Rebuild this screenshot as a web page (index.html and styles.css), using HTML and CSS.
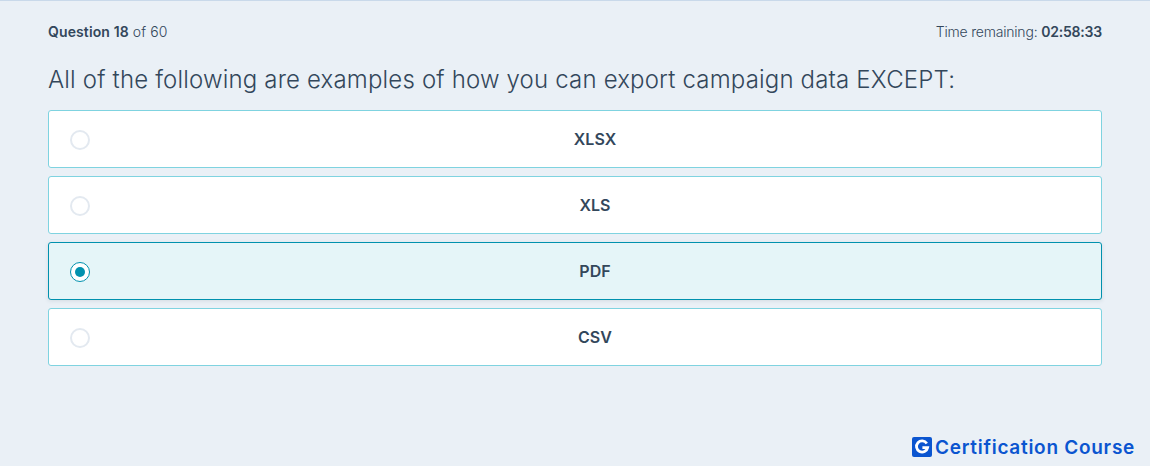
FILE: index.html
```html
<!DOCTYPE html>
<html lang="en">
<head>
<meta charset="utf-8">
<title>Question 18 of 60</title>
<link rel="stylesheet" href="styles.css">
</head>
<body>
<main class="quiz">
  <header class="meta">
    <div class="count"><strong>Question 18</strong> of 60</div>
    <div class="timer">Time remaining: <strong>02:58:33</strong></div>
  </header>
  <h1 class="question">All of the following are examples of how you can export campaign data EXCEPT:</h1>
  <div class="options">
    <div class="option"><span class="radio"></span><span class="label">XLSX</span></div>
    <div class="option"><span class="radio"></span><span class="label">XLS</span></div>
    <div class="option selected"><span class="radio"><span class="dot"></span></span><span class="label">PDF</span></div>
    <div class="option"><span class="radio"></span><span class="label">CSV</span></div>
  </div>
</main>
<footer class="brand">
  <svg class="logo" viewBox="0 0 20 20" width="20" height="20" aria-hidden="true">
    <rect width="20" height="20" rx="2" fill="#0b55d0"/>
    <path d="M14.8 6.4A5.6 5.6 0 1 0 15.6 10.6H10.4" fill="none" stroke="#fff" stroke-width="2.8"/>
  </svg>
  <span>Certification Course</span>
</footer>
</body>
</html>
```
FILE: styles.css
```css
* { box-sizing: border-box; }
html, body { height: 100%; }
body {
  margin: 0;
  height: 466px;
  overflow: hidden;
  background: #eaf0f6;
  border-top: 1px solid #c9d9ea;
  color: #33475b;
  font-family: "Inter", "Liberation Sans", sans-serif;
  display: flex;
  flex-direction: column;
}
.quiz { padding: 0 48px; flex: 1; }
.meta {
  display: flex;
  justify-content: space-between;
  align-items: center;
  padding-top: 22px;
  height: 40px;
  font-size: 14px;
  line-height: 18px;
  font-weight: 300;
}
.meta strong { font-weight: 600; }
.count { letter-spacing: .12px; }
.timer { letter-spacing: -.2px; }
.question {
  margin: 0;
  padding-top: 23px;
  font-size: 24px;
  line-height: 32px;
  font-weight: 300;
  letter-spacing: .17px;
  white-space: nowrap;
}
.options {
  display: flex;
  flex-direction: column;
  gap: 8px;
  margin-top: 14px;
}
.option {
  height: 58px;
  display: flex;
  align-items: center;
  background: #fff;
  border: 1px solid #7fd3e0;
  border-radius: 3px;
  padding: 2px 1px 0 21px;
}
.option.selected {
  background: #e5f5f8;
  border-color: #0091ae;
  box-shadow: 0 1px 4px rgba(45, 62, 80, .12);
}
.radio {
  flex: none;
  width: 20px;
  height: 20px;
  border-radius: 50%;
  border: 2px solid #e3e9f0;
  background: #fff;
  display: flex;
  align-items: center;
  justify-content: center;
}
.selected .radio { border: 1px solid #0091ae; }
.dot { width: 10px; height: 10px; border-radius: 50%; background: #0091ae; }
.label {
  flex: 1;
  text-align: center;
  font-size: 16px;
  line-height: 20px;
  font-weight: 600;
  margin-top: -2px;
}
.brand {
  display: flex;
  align-items: center;
  justify-content: flex-end;
  gap: 3px;
  height: 20px;
  margin: 0 15px 9px 0;
  color: #0b55d0;
  font-size: 19px;
  font-weight: 600;
  letter-spacing: .72px;
}
.logo { flex: none; }
```
